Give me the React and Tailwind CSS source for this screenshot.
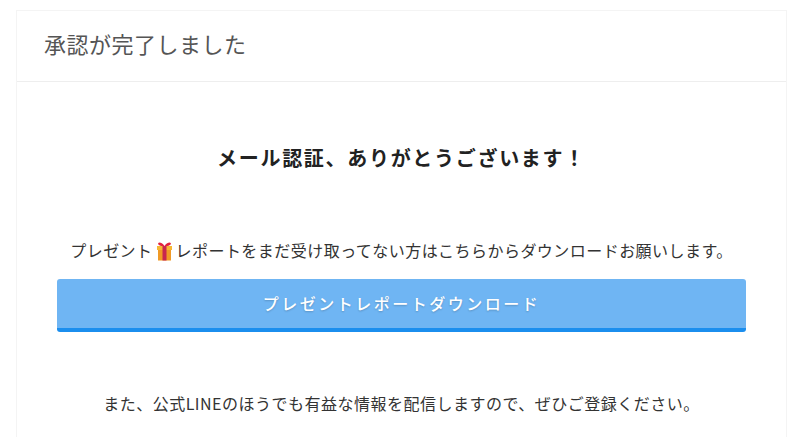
function GiftIcon() {
  return (
    <svg width="17" height="19" viewBox="0 0 17 19" className="mx-[3px] inline-block align-[-4px]">
      <path d="M8.5 4C6 .5 3 0 2.2 1.2 1.500 2.600 4 4 8.500 4.400 13 4 15.500 2.600 14.800 1.200 14 0 11 .5 8.500 4Z" fill="#e2233f" />
      <rect x="1" y="4" width="15" height="4" fill="#f7b733" />
      <rect x="2" y="8" width="13" height="10.500" fill="#f09a26" />
      <rect x="6.500" y="4" width="4" height="14.500" fill="#c8264f" />
    </svg>
  )
}

export default function App() {
  return (
    <div className="h-[437px] w-[800px] overflow-hidden bg-white pl-4 pr-[13px] pt-[10px] font-['Noto_Sans_CJK_JP','Noto_Sans',sans-serif] text-[#333]">
      <div className="h-[460px] border border-[#f4f4f4]">
        <div className="flex h-[71px] items-center border-b border-[#eeeeee] pb-[6px] pl-[27px]">
          <h1 className="text-[22px] leading-none tracking-[0.500px] text-[#555]">承認が完了しました</h1>
        </div>
        <div className="flex flex-col items-center px-10">
          <h2 className="mt-[61px] text-[20px] font-bold leading-[30px] tracking-[1.700px] text-[#222]">
            メール認証、ありがとうございます！
          </h2>
          <p className="mt-[65px] text-[16px] leading-6 tracking-[0.460px]">
            プレゼント
            <GiftIcon />
            レポートをまだ受け取ってない方はこちらからダウンロードお願いします。
          </p>
          <a className="mt-[17px] flex h-[53px] w-full items-center justify-center rounded-[3px] border-b-4 border-[#1b8eee] bg-[#6fb5f3] pb-[2px] text-[16px] font-medium tracking-[2.500px] text-white [text-shadow:0_1px_2px_rgba(0,0,0,0.2)]">
            プレゼントレポートダウンロード
          </a>
          <p className="mt-[59px] text-[16px] leading-6 tracking-[0.500px]">
            また、公式LINEのほうでも有益な情報を配信しますので、ぜひご登録ください。
          </p>
        </div>
      </div>
    </div>
  )
}
